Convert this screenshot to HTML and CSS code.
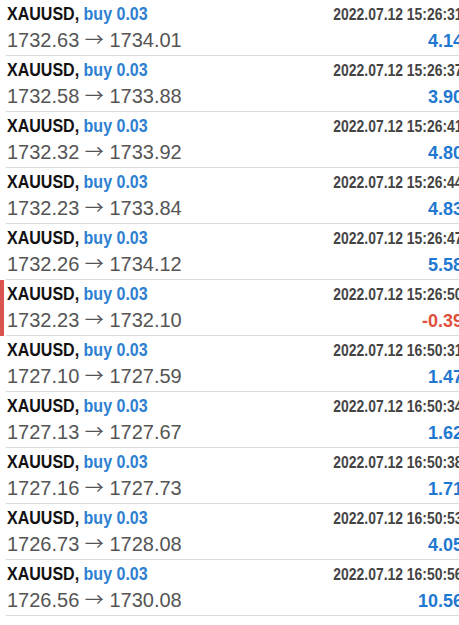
FILE: index.html
```html
<!DOCTYPE html>
<html lang="en">
<head>
    <meta charset="UTF-8">
    <title>History</title>
    <link rel="stylesheet" href="styles.css">
</head>
<body>
    <div class="list">
        <div class="row">
            <div class="row-body">
                <div class="line"><span class="deal"><b>XAUUSD,</b> <span class="side">buy 0.03</span></span><span class="time">2022.07.12 15:26:31</span></div>
                <div class="line"><span class="prices">1732.63 <span class="arrow">→</span> 1734.01</span><span class="profit">4.14</span></div>
            </div>
        </div>
        <div class="row">
            <div class="row-body">
                <div class="line"><span class="deal"><b>XAUUSD,</b> <span class="side">buy 0.03</span></span><span class="time">2022.07.12 15:26:37</span></div>
                <div class="line"><span class="prices">1732.58 <span class="arrow">→</span> 1733.88</span><span class="profit">3.90</span></div>
            </div>
        </div>
        <div class="row">
            <div class="row-body">
                <div class="line"><span class="deal"><b>XAUUSD,</b> <span class="side">buy 0.03</span></span><span class="time">2022.07.12 15:26:41</span></div>
                <div class="line"><span class="prices">1732.32 <span class="arrow">→</span> 1733.92</span><span class="profit">4.80</span></div>
            </div>
        </div>
        <div class="row">
            <div class="row-body">
                <div class="line"><span class="deal"><b>XAUUSD,</b> <span class="side">buy 0.03</span></span><span class="time">2022.07.12 15:26:44</span></div>
                <div class="line"><span class="prices">1732.23 <span class="arrow">→</span> 1733.84</span><span class="profit">4.83</span></div>
            </div>
        </div>
        <div class="row">
            <div class="row-body">
                <div class="line"><span class="deal"><b>XAUUSD,</b> <span class="side">buy 0.03</span></span><span class="time">2022.07.12 15:26:47</span></div>
                <div class="line"><span class="prices">1732.26 <span class="arrow">→</span> 1734.12</span><span class="profit">5.58</span></div>
            </div>
        </div>
        <div class="row loss">
            <div class="row-body">
                <div class="line"><span class="deal"><b>XAUUSD,</b> <span class="side">buy 0.03</span></span><span class="time">2022.07.12 15:26:50</span></div>
                <div class="line"><span class="prices">1732.23 <span class="arrow">→</span> 1732.10</span><span class="profit">-0.39</span></div>
            </div>
        </div>
        <div class="row">
            <div class="row-body">
                <div class="line"><span class="deal"><b>XAUUSD,</b> <span class="side">buy 0.03</span></span><span class="time">2022.07.12 16:50:31</span></div>
                <div class="line"><span class="prices">1727.10 <span class="arrow">→</span> 1727.59</span><span class="profit">1.47</span></div>
            </div>
        </div>
        <div class="row">
            <div class="row-body">
                <div class="line"><span class="deal"><b>XAUUSD,</b> <span class="side">buy 0.03</span></span><span class="time">2022.07.12 16:50:34</span></div>
                <div class="line"><span class="prices">1727.13 <span class="arrow">→</span> 1727.67</span><span class="profit">1.62</span></div>
            </div>
        </div>
        <div class="row">
            <div class="row-body">
                <div class="line"><span class="deal"><b>XAUUSD,</b> <span class="side">buy 0.03</span></span><span class="time">2022.07.12 16:50:38</span></div>
                <div class="line"><span class="prices">1727.16 <span class="arrow">→</span> 1727.73</span><span class="profit">1.71</span></div>
            </div>
        </div>
        <div class="row">
            <div class="row-body">
                <div class="line"><span class="deal"><b>XAUUSD,</b> <span class="side">buy 0.03</span></span><span class="time">2022.07.12 16:50:53</span></div>
                <div class="line"><span class="prices">1726.73 <span class="arrow">→</span> 1728.08</span><span class="profit">4.05</span></div>
            </div>
        </div>
        <div class="row">
            <div class="row-body">
                <div class="line"><span class="deal"><b>XAUUSD,</b> <span class="side">buy 0.03</span></span><span class="time">2022.07.12 16:50:56</span></div>
                <div class="line"><span class="prices">1726.56 <span class="arrow">→</span> 1730.08</span><span class="profit">10.56</span></div>
            </div>
        </div>
    </div>
</body>
</html>
```

FILE: styles.css
```css
body {
    margin: 0;
    background-color: #fff;
    font-family: 'Liberation Sans', Arial, sans-serif;
    overflow: hidden;
}
.list {
    width: 463px;
}
.row {
    display: flex;
    padding-left: 6px;
}
.row.loss {
    border-left: 4px solid #d9534f;
    padding-left: 2px;
}
.row-body {
    flex: 1;
    height: 54px;
    padding-top: 1px;
    border-bottom: 1px solid #dcdcdc;
    padding-left: 1px;
}
.line {
    display: flex;
    justify-content: space-between;
    align-items: baseline;
    height: 26px;
    line-height: 26px;
}
/* the app font is tall and narrow */
.deal {
    display: inline-block;
    font-size: 18px;
    font-weight: bold;
    color: #111;
    transform: scaleX(0.89);
    transform-origin: left;
    white-space: nowrap;
}
.side {
    color: #2d80d2;
}
.time {
    display: inline-block;
    font-size: 16px;
    font-weight: bold;
    color: #444;
    transform: scaleX(0.87);
    transform-origin: right;
    white-space: nowrap;
}
.prices {
    font-size: 20px;
    color: #555;
    white-space: nowrap;
}
.arrow {
    font-family: 'Noto Sans CJK SC', sans-serif;
    font-size: 19px;
    line-height: 0;
}
.profit {
    font-size: 18px;
    font-weight: bold;
    color: #1f78d1;
}
.loss .profit {
    color: #e0503c;
}
```
